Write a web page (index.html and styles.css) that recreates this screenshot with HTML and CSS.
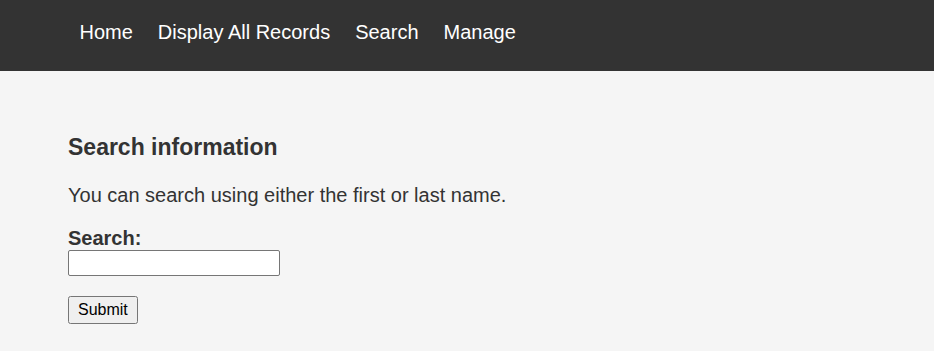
FILE: index.html
```html
<!DOCTYPE html>
<html lang="en">
<head>
    <meta charset="UTF-8">
    <meta name="viewport" content="width=device-width, initial-scale=1.0">
    <title>Search</title>
    <link rel="stylesheet" href="styles.css">
</head>
<body>
    <nav class="topnav">
        <a href="#">Home</a>
        <a href="#">Display All Records</a>
        <a href="#">Search</a>
        <a href="#">Manage</a>
    </nav>

    <div class="content">
        <h2>Search information</h2>
        <p>You can search using either the first or last name.</p>
        <form id="searchForm">
            <label for="search">Search:</label>
            <input type="text" id="search" name="search">
            <button type="submit">Submit</button>
        </form>
    </div>
</body>
</html>
```

FILE: styles.css
```css
body {
    margin: 0;
    background-color: #f5f5f5;
    color: #333;
    font-family: "Liberation Sans", Arial, sans-serif;
}

.topnav {
    background-color: #333;
    height: 71px;
    box-sizing: border-box;
    padding: 21px 67px 0;
    display: flex;
}

.topnav a {
    color: #fff;
    text-decoration: none;
    font-size: 20px;
    padding: 0 12.5px;
}

.content {
    padding: 63px 68px 20px;
}

h2 {
    font-size: 23px;
    margin: 0 0 23px;
}

p {
    font-size: 20px;
    margin: 0 0 20px;
}

label {
    display: block;
    font-size: 20px;
    font-weight: bold;
}

input[type="text"] {
    display: block;
    width: 212px;
    height: 26px;
    box-sizing: border-box;
    margin: 0 0 20px;
    border: 1px solid #767676;
    border-radius: 2px;
}

button[type="submit"] {
    font-family: "Liberation Sans", Arial, sans-serif;
    font-size: 16px;
    padding: 3px 8px;
}
```
